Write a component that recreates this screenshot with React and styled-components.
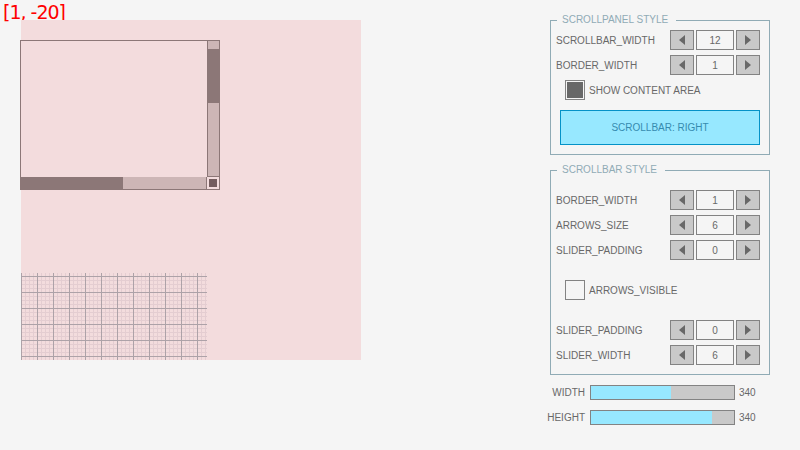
import React from 'react';
import styled, { createGlobalStyle, css } from 'styled-components';

const GlobalStyle = createGlobalStyle`
  html, body {
    margin: 0;
    padding: 0;
    background: #f5f5f5;
  }
  * { box-sizing: border-box; }
`

const Screen = styled.div`
  width: 800px;
  height: 450px;
  display: flex;
  background: #f5f5f5;
  font-family: "Liberation Sans", Arial, sans-serif;
  font-size: 10px;
  color: #686868;
  overflow: hidden;
`

const Canvas = styled.div`
  position: relative;
  width: 540px;
  height: 100%;
`

const Coords = styled.div`
  padding: 1px 0 0 3px;
  font-family: "DejaVu Sans", sans-serif;
  font-size: 19px;
  letter-spacing: -1px;
  line-height: 22px;
  color: #ff0000;
`

const ContentArea = styled.div`
  position: absolute;
  left: 21px;
  top: 20px;
  width: 340px;
  height: 340px;
  background: #f3dcdd;
`

const Panel = styled.div`
  position: absolute;
  left: 20px;
  top: 40px;
  width: 200px;
  height: 150px;
  border: 1px solid #8c7777;
  display: grid;
  grid-template-columns: 1fr 12px;
  grid-template-rows: 1fr 12px;
`

const Track = styled.div`
  position: relative;
  background: #cdb6b6;
  ${({vertical}) => vertical ? css`
    border-left: 1px solid #8c7777;
    border-bottom: 1px solid #8c7777;
  ` : css`
    border-right: 1px solid #8c7777;
  `}
`

const Thumb = styled.div`
  position: absolute;
  background: #8c7777;
  ${({vertical}) => vertical ? css`
    left: -1px;
    right: 0;
    top: 8px;
    height: 54px;
  ` : css`
    left: 0;
    top: 0;
    bottom: 0;
    width: 102px;
  `}
`

const Corner = styled.div`
  display: flex;
  align-items: center;
  justify-content: center;
  background: #f3dcdd;
  &:after {
    content: "";
    width: 8px;
    height: 8px;
    background: #745d5f;
  }
`

const Grid = styled.div`
  position: absolute;
  left: 21px;
  top: 273px;
  width: 186px;
  height: 87px;
  background-image:
    linear-gradient(to right, #ada2a8 1px, transparent 1px),
    linear-gradient(to bottom, #ada2a8 1px, transparent 1px),
    linear-gradient(to right, #e4cdd1 1px, transparent 1px),
    linear-gradient(to bottom, #e4cdd1 1px, transparent 1px);
  background-size: 16px 100%, 100% 16px, 4px 100%, 100% 4px;
  background-position: 0 0, 0 3px, 0 0, 0 3px;
`

const Side = styled.div`
  width: 260px;
  padding-top: 20px;
  display: flex;
  flex-direction: column;
`

const Group = styled.div`
  position: relative;
  margin-left: 10px;
  width: 220px;
  border: 1px solid #90abb5;
  padding: ${({first}) => first ? '9px' : '19px'} 9px 9px 5px;
  display: flex;
  flex-direction: column;
  gap: 5px;
  & + & {
    margin-top: 15px;
  }
`

const GroupTitle = styled.span`
  position: absolute;
  left: 6px;
  top: -7px;
  padding: 0 8px 0 5px;
  line-height: 12px;
  background: #f5f5f5;
  color: #90abb5;
`

const Row = styled.div`
  height: 20px;
  display: flex;
  align-items: center;
  justify-content: space-between;
  ${({spaced}) => spaced && css`
    margin-top: 15px;
  `}
`

const SpinWrap = styled.div`
  display: flex;
  gap: 2px;
`

const ArrowBtn = styled.div`
  width: 24px;
  height: 20px;
  background: #c9c9c9;
  border: 1px solid #838383;
  display: flex;
  align-items: center;
  justify-content: center;
`

const ValueBox = styled.div`
  width: 38px;
  height: 20px;
  background: #f5f5f5;
  border: 1px solid #838383;
  display: flex;
  align-items: center;
  justify-content: center;
`

const CheckRow = styled.div`
  height: 20px;
  margin-left: 9px;
  display: flex;
  align-items: center;
  gap: 4px;
  ${({spaced}) => spaced && css`
    margin-top: 15px;
  `}
`

const Box = styled.div`
  width: 20px;
  height: 20px;
  border: 1px solid #838383;
  padding: 1px;
  &:after {
    content: "";
    display: ${({checked}) => checked ? 'block' : 'none'};
    width: 100%;
    height: 100%;
    background: #686868;
  }
`

const Button = styled.div`
  margin: 5px 0 0 4px;
  height: 35px;
  background: #97e8ff;
  border: 1px solid #0492c7;
  color: #368baf;
  display: flex;
  align-items: center;
  justify-content: center;
`

const SliderRow = styled.div`
  margin-top: 10px;
  height: 15px;
  display: flex;
  align-items: center;
`

const SliderLabel = styled.div`
  width: 45px;
  text-align: right;
  margin-right: 5px;
`

const SliderBar = styled.div`
  width: 145px;
  height: 15px;
  border: 1px solid #838383;
  background: #c9c9c9;
  margin-right: 4px;
`

const SliderFill = styled.div`
  height: 100%;
  background: #97e8ff;
`

const Arrow = ({dir}) => (
  <svg width="6" height="10" viewBox="0 0 6 10">
    <polygon points={dir === 'left' ? '6,0 6,10 0,5' : '0,0 0,10 6,5'} fill="#686868" />
  </svg>
)

const Spinner = ({label, value, spaced}) => (
  <Row spaced={spaced}>
    <span>{label}</span>
    <SpinWrap>
      <ArrowBtn><Arrow dir="left" /></ArrowBtn>
      <ValueBox>{value}</ValueBox>
      <ArrowBtn><Arrow dir="right" /></ArrowBtn>
    </SpinWrap>
  </Row>
)

const App = () => {
  return (
    <Screen>
      <GlobalStyle />
      <Canvas>
        <Coords>[1, -20]</Coords>
        <ContentArea />
        <Panel>
          <div />
          <Track vertical><Thumb vertical /></Track>
          <Track><Thumb /></Track>
          <Corner />
        </Panel>
        <Grid />
      </Canvas>
      <Side>
        <Group first>
          <GroupTitle>SCROLLPANEL STYLE</GroupTitle>
          <Spinner label="SCROLLBAR_WIDTH" value="12" />
          <Spinner label="BORDER_WIDTH" value="1" />
          <CheckRow>
            <Box checked />
            <span>SHOW CONTENT AREA</span>
          </CheckRow>
          <Button>SCROLLBAR: RIGHT</Button>
        </Group>
        <Group>
          <GroupTitle>SCROLLBAR STYLE</GroupTitle>
          <Spinner label="BORDER_WIDTH" value="1" />
          <Spinner label="ARROWS_SIZE" value="6" />
          <Spinner label="SLIDER_PADDING" value="0" />
          <CheckRow spaced>
            <Box />
            <span>ARROWS_VISIBLE</span>
          </CheckRow>
          <Spinner label="SLIDER_PADDING" value="0" spaced />
          <Spinner label="SLIDER_WIDTH" value="6" />
        </Group>
        <SliderRow>
          <SliderLabel>WIDTH</SliderLabel>
          <SliderBar><SliderFill style={{ width: 80 }} /></SliderBar>
          <span>340</span>
        </SliderRow>
        <SliderRow>
          <SliderLabel>HEIGHT</SliderLabel>
          <SliderBar><SliderFill style={{ width: 121 }} /></SliderBar>
          <span>340</span>
        </SliderRow>
      </Side>
    </Screen>
  )
}

export default App
